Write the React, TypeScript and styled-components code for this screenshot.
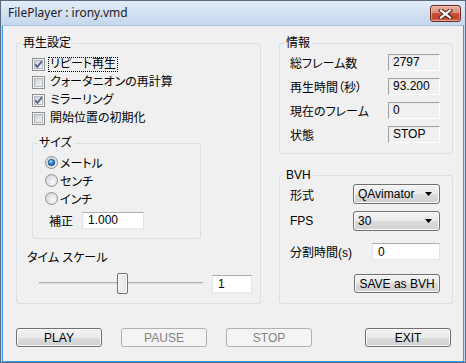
import React from 'react';
import styled, { createGlobalStyle } from 'styled-components';

const GlobalStyle = createGlobalStyle`
  *, *::before, *::after { box-sizing: border-box; }
  html, body { margin: 0; padding: 0; overflow: hidden; }
  body {
    font-family: "Liberation Sans", "Noto Sans CJK JP", sans-serif;
    font-size: 12px;
    color: #000;
    font-feature-settings: "palt";
  }
`;

const Window = styled.div`
  width: 466px;
  height: 363px;
  border: 1px solid #5a6b80;
  background: #c4d8ee;
  display: flex;
  flex-direction: column;
`;

const TitleBar = styled.div`
  height: 24px;
  flex: none;
  display: flex;
  justify-content: space-between;
  align-items: flex-start;
  padding-left: 7px;
  background: linear-gradient(#e3ecf7, #c4d7ed);
`;

const Title = styled.span`
  font-family: "Noto Sans", "Liberation Sans", sans-serif;
  font-size: 12px;
  line-height: 24px;
  color: #1b1b1b;
`;

const CloseButton = styled.div`
  width: 31px;
  height: 17px;
  margin: 4px 4px 0 0;
  border: 1px solid #6b2a22;
  border-radius: 3px;
  background: linear-gradient(#eab0a2 0%, #dc8d7a 45%, #c8533c 50%, #c0432c 80%, #d7745a 100%);
  box-shadow: inset 0 0 0 1px rgba(255, 220, 210, 0.45);
  display: flex;
  align-items: center;
  justify-content: center;
`;

const Client = styled.div`
  flex: 1;
  margin: 0 1px;
  border: 1px solid #3d9ae2;
  border-top-color: #a7bdd8;
  background: #f0f0f0;
  padding: 10px 10px 0 13px;
  display: flex;
  flex-direction: column;
`;

const GroupsRow = styled.div`
  display: flex;
  gap: 18px;
`;

const RightColumn = styled.div`
  display: flex;
  flex-direction: column;
  gap: 14px;
`;

const Group = styled.fieldset<{ $w: number; $h: number }>`
  margin: 0;
  padding: 0;
  min-width: 0;
  width: ${(p) => p.$w}px;
  height: ${(p) => p.$h}px;
  border: 1px solid #d5dfe5;
  border-radius: 3px;
`;

const Legend = styled.legend`
  margin-left: 4px;
  padding: 0 2px;
  line-height: 14px;
`;

const LeftBody = styled.div`
  padding: 5px 0 0 10px;
`;

const CheckList = styled.div`
  margin-left: 5px;
`;

const CheckRow = styled.div`
  display: flex;
  align-items: center;
  height: 18px;
  gap: 3px;
`;

const CheckLabel = styled.span<{ $focus?: boolean }>`
  padding: 0 1px;
  line-height: 13px;
  border: 1px dotted ${(p) => (p.$focus ? '#000' : 'transparent')};
`;

const SizeBox = styled(Group)`
  margin: 9px 0 0 5px;
`;

const SizeBody = styled.div`
  padding: 3px 0 0 12px;
`;

const RadioRow = styled.div`
  display: flex;
  align-items: center;
  height: 18px;
  gap: 2px;
`;

const ScaleRow = styled.div`
  display: flex;
  align-items: center;
  height: 18px;
  margin: 4px 0 0 4px;
`;

const ScaleLabel = styled.span`
  width: 33px;
`;

const TextBox = styled.div<{ $w: number; $h?: number }>`
  width: ${(p) => p.$w}px;
  height: ${(p) => p.$h ?? 17}px;
  background: #fff;
  border: 1px solid #e2e3ea;
  border-top-color: #abadb3;
  border-bottom-color: #e3e9ef;
  padding-left: 5px;
  display: flex;
  align-items: center;
`;

const TimeLabel = styled.div`
  margin-top: 11px;
  line-height: 16px;
`;

const SliderRow = styled.div`
  display: flex;
  align-items: center;
  gap: 9px;
  margin: 7px 0 0 12px;
  height: 21px;
`;

const Slider = styled.div`
  position: relative;
  width: 164px;
  height: 21px;
  display: flex;
  align-items: center;
`;

const Track = styled.div`
  width: 100%;
  height: 4px;
  border-top: 1px solid #a9abab;
  background: #e4e6e6;
  border-bottom: 1px solid #f6f6f6;
`;

const Thumb = styled.div`
  position: absolute;
  top: 0;
  width: 11px;
  height: 21px;
  border: 1px solid #6f6f6f;
  border-radius: 2px;
  background: linear-gradient(90deg, #f3f3f3, #e2e2e2);
  box-shadow: inset 0 0 0 1px #fcfcfc;
`;

const InfoBody = styled.div`
  padding: 0 12px 0 10px;
  display: grid;
  grid-template-columns: 1fr 52px;
  grid-auto-rows: 24px;
  align-items: center;
`;

const ValueBox = styled.div`
  height: 17px;
  border: 1px solid #fff;
  border-top-color: #a0a0a0;
  border-left-color: #a0a0a0;
  padding-left: 4px;
  display: flex;
  align-items: center;
`;

const BvhBody = styled.div`
  padding: 2px 12px 0 10px;
  display: flex;
  flex-direction: column;
`;

const BvhRow = styled.div<{ $h: number; $mt: number }>`
  display: flex;
  align-items: center;
  justify-content: space-between;
  height: ${(p) => p.$h}px;
  margin-top: ${(p) => p.$mt}px;
`;

const Combo = styled.div`
  width: 87px;
  height: 20px;
  border: 1px solid #707070;
  border-radius: 3px;
  background: linear-gradient(#f2f2f2 0%, #ebebeb 50%, #dddddd 50%, #cfcfcf 100%);
  box-shadow: inset 0 0 0 1px #fafafa;
  padding: 0 7px 0 4px;
  display: flex;
  align-items: center;
  justify-content: space-between;
`;

const Button = styled.div<{ $w: number; $disabled?: boolean }>`
  width: ${(p) => p.$w}px;
  height: 19px;
  border: 1px solid ${(p) => (p.$disabled ? '#adb2b5' : '#707070')};
  border-radius: 3px;
  background: ${(p) =>
    p.$disabled ? '#f4f4f4' : 'linear-gradient(#f2f2f2 0%, #ebebeb 50%, #dddddd 50%, #cfcfcf 100%)'};
  box-shadow: inset 0 0 0 1px ${(p) => (p.$disabled ? '#f4f4f4' : '#fafafa')};
  color: ${(p) => (p.$disabled ? '#838383' : '#000')};
  display: flex;
  align-items: center;
  justify-content: center;
`;

const ButtonRow = styled.div`
  display: flex;
  gap: 19px;
  margin: 24px 2px 0 0;
`;

const Spacer = styled.div`
  flex: 1;
`;

const CloseGlyph = () => (
  <svg width="15" height="10" viewBox="0 0 15 10">
    <path d="M3 1.5 L12 8.5 M12 1.5 L3 8.5" stroke="#4a2a24" strokeWidth="4.2" strokeLinecap="square" />
    <path d="M3 1.5 L12 8.5 M12 1.5 L3 8.5" stroke="#fff" strokeWidth="2.2" strokeLinecap="square" />
  </svg>
);

const CheckIcon = ({ checked }: { checked?: boolean }) => (
  <svg width="13" height="13" viewBox="0 0 13 13">
    <defs>
      <linearGradient id="cbFill" x1="0" y1="0" x2="1" y2="1">
        <stop offset="0" stopColor="#c9cdd3" />
        <stop offset="1" stopColor="#f7f7f7" />
      </linearGradient>
    </defs>
    <rect x="0.5" y="0.5" width="12" height="12" fill="#f5f5f5" stroke="#8e8f8f" />
    <rect x="2.5" y="2.5" width="8" height="8" fill="url(#cbFill)" stroke="#b3b7bd" />
    {checked && (
      <path d="M3.2 6.3 L5.4 8.8 L9.9 3.3" fill="none" stroke="#4c5f8e" strokeWidth="1.8" />
    )}
  </svg>
);

const RadioIcon = ({ checked }: { checked?: boolean }) => (
  <svg width="13" height="13" viewBox="0 0 13 13">
    <defs>
      <radialGradient id="rbFill" cx="0.6" cy="0.6" r="0.7">
        <stop offset="0" stopColor="#fbfbfb" />
        <stop offset="1" stopColor="#cfd1d4" />
      </radialGradient>
      <radialGradient id="rbDot" cx="0.4" cy="0.35" r="0.7">
        <stop offset="0" stopColor="#a8dcff" />
        <stop offset="0.5" stopColor="#2a86d4" />
        <stop offset="1" stopColor="#0e4a8a" />
      </radialGradient>
    </defs>
    <circle cx="6.5" cy="6.5" r="6" fill="url(#rbFill)" stroke="#8e8f8f" />
    {checked && <circle cx="6.5" cy="6.5" r="3.3" fill="url(#rbDot)" stroke="#1b4f7e" strokeWidth="0.7" />}
  </svg>
);

const ArrowIcon = () => (
  <svg width="7" height="4" viewBox="0 0 7 4">
    <polygon points="0,0 7,0 3.5,4" fill="#000" />
  </svg>
);

const checks = [
  { label: 'リピート再生', checked: true, focus: true },
  { label: 'クォータニオンの再計算', checked: false },
  { label: 'ミラーリング', checked: true },
  { label: '開始位置の初期化', checked: false },
];

const sizes = [
  { label: 'メートル', checked: true },
  { label: 'センチ', checked: false },
  { label: 'インチ', checked: false },
];

const info = [
  ['総フレーム数', '2797'],
  ['再生時間（秒）', '93.200'],
  ['現在のフレーム', '0'],
  ['状態', 'STOP'],
];

const App = () => {
  const thumbLeft = 78;
  return (
    <>
      <GlobalStyle />
      <Window>
        <TitleBar>
          <Title>FilePlayer : irony.vmd</Title>
          <CloseButton>
            <CloseGlyph />
          </CloseButton>
        </TitleBar>
        <Client>
          <GroupsRow>
            <Group $w={245} $h={268}>
              <Legend>再生設定</Legend>
              <LeftBody>
                <CheckList>
                  {checks.map((c) => (
                    <CheckRow key={c.label}>
                      <CheckIcon checked={c.checked} />
                      <CheckLabel $focus={c.focus}>{c.label}</CheckLabel>
                    </CheckRow>
                  ))}
                </CheckList>
                <SizeBox $w={169} $h={103}>
                  <Legend>サイズ</Legend>
                  <SizeBody>
                    {sizes.map((s) => (
                      <RadioRow key={s.label}>
                        <RadioIcon checked={s.checked} />
                        <span>{s.label}</span>
                      </RadioRow>
                    ))}
                    <ScaleRow>
                      <ScaleLabel>補正</ScaleLabel>
                      <TextBox $w={62}>1.000</TextBox>
                    </ScaleRow>
                  </SizeBody>
                </SizeBox>
                <TimeLabel>タイム スケール</TimeLabel>
                <SliderRow>
                  <Slider>
                    <Track />
                    <Thumb style={{ left: thumbLeft }} />
                  </Slider>
                  <TextBox $w={40} $h={18}>1</TextBox>
                </SliderRow>
              </LeftBody>
            </Group>
            <RightColumn>
              <Group $w={174} $h={118}>
                <Legend>情報</Legend>
                <InfoBody>
                  {info.map(([k, v]) => (
                    <React.Fragment key={k}>
                      <span>{k}</span>
                      <ValueBox>{v}</ValueBox>
                    </React.Fragment>
                  ))}
                </InfoBody>
              </Group>
              <Group $w={174} $h={136}>
                <Legend>BVH</Legend>
                <BvhBody>
                  <BvhRow $h={20} $mt={0}>
                    <span>形式</span>
                    <Combo>
                      QAvimator
                      <ArrowIcon />
                    </Combo>
                  </BvhRow>
                  <BvhRow $h={20} $mt={7}>
                    <span>FPS</span>
                    <Combo>
                      30
                      <ArrowIcon />
                    </Combo>
                  </BvhRow>
                  <BvhRow $h={17} $mt={12}>
                    <span>分割時間(s)</span>
                    <TextBox $w={68}>0</TextBox>
                  </BvhRow>
                  <BvhRow $h={19} $mt={14}>
                    <Spacer />
                    <Button $w={86}>SAVE as BVH</Button>
                  </BvhRow>
                </BvhBody>
              </Group>
            </RightColumn>
          </GroupsRow>
          <ButtonRow>
            <Button $w={86}>PLAY</Button>
            <Button $w={86} $disabled>
              PAUSE
            </Button>
            <Button $w={86} $disabled>
              STOP
            </Button>
            <Spacer />
            <Button $w={86}>EXIT</Button>
          </ButtonRow>
        </Client>
      </Window>
    </>
  );
};

export default App;
